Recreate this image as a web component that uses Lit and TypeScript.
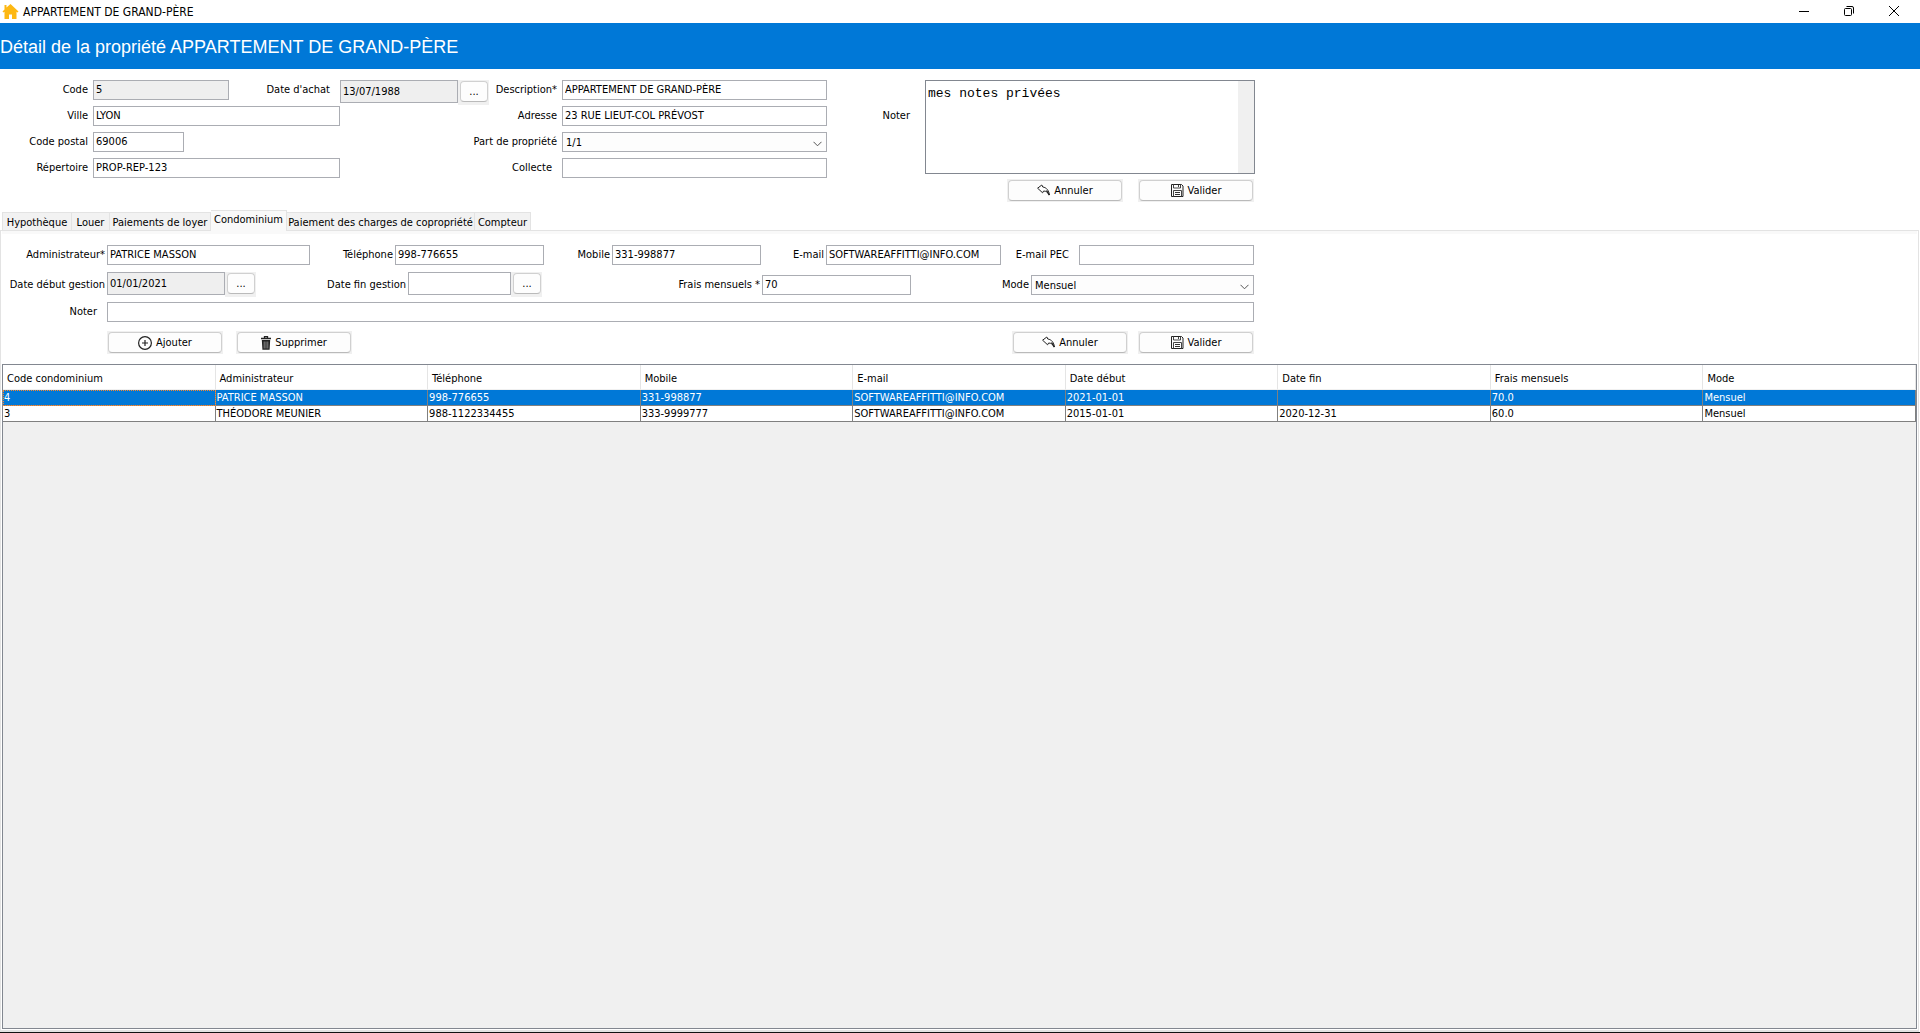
import { LitElement, html, css, svg, nothing } from "lit";
import { customElement } from "lit/decorators.js";

const TABS = [
  { label: "Hypothèque", width: 70 },
  { label: "Louer", width: 38 },
  { label: "Paiements de loyer", width: 101 },
  { label: "Condominium", width: 76 },
  { label: "Paiement des charges de copropriété", width: 188 },
  { label: "Compteur", width: 56 },
];

const COLUMNS = [
  "Code condominium", "Administrateur", "Téléphone", "Mobile", "E-mail",
  "Date début", "Date fin", "Frais mensuels", "Mode",
];

const ROWS = [
  ["4", "PATRICE MASSON", "998-776655", "331-998877", "SOFTWAREAFFITTI@INFO.COM", "2021-01-01", "", "70.0", "Mensuel"],
  ["3", "THÉODORE MEUNIER", "988-1122334455", "333-9999777", "SOFTWAREAFFITTI@INFO.COM", "2015-01-01", "2020-12-31", "60.0", "Mensuel"],
];

const icon = (content: unknown, w = 14, h = 14) =>
  html`<svg width=${w} height=${h} viewBox="0 0 ${w} ${h}" fill="none" aria-hidden="true">${content}</svg>`;

const undoIcon = icon(svg`<path d="M.6 4.200 4.800 1 5.800 3C9.500 3.500 12 6.500 12.400 11 10.800 8.200 9 7 6.600 7L5.600 8.800Z" fill="#fff" stroke="#222" stroke-linejoin="round"/><path d="M9.500 6.500 12.400 11.200" stroke="#222" stroke-width="1.400"/>`, 13, 13);
const saveIcon = icon(svg`<path d="M.5.5h10l1.500 1.500v10.500H.5z" stroke="#222"/><path d="M2.500.5v3.500h7V.5M7.500 1v2M2.500 12.500v-6h8v6" stroke="#444"/><path d="M4 8.500h5M4 10.500h5" stroke="#333"/>`, 13, 13);
const addIcon = icon(svg`<circle cx="7" cy="7" r="6.400" stroke="#222" stroke-width="1.200"/><path d="M7 4v6M4 7h6" stroke="#222" stroke-width="1.200"/>`);
const trashIcon = icon(svg`<path d="M0 2.500h10M3.500 2V.6h3V2" stroke="#222" stroke-width="1.300"/><path d="M.8 4h8.400l-.6 9.800H1.400z" fill="#222"/><path d="M3.200 5.500v7M5 5.500v7M6.800 5.500v7" stroke="#ccc" stroke-width=".6"/>`, 10, 14);
const chevron = html`<svg class="chevron" width="9" height="6" viewBox="0 0 9 6" fill="none" aria-hidden="true"><path d="M.5.8 4.500 4.800 8.500.8" stroke="#555"/></svg>`;

@customElement("app-root")
export class AppRoot extends LitElement {
  static styles = css`
    :host {
      display: flex;
      flex-direction: column;
      box-sizing: border-box;
      min-height: 100vh;
      background: #fff;
      border-bottom: 1px solid #111;
      color: #000;
      font: 11px/20px "DejaVu Sans Condensed", "DejaVu Sans", sans-serif;
    }
    * { box-sizing: border-box; }
    svg { display: block; flex: none; }
    button, input, select, textarea { font: inherit; color: inherit; margin: 0; }
    button { padding: 0; border: 0; background: none; }

    .titlebar { display: flex; align-items: center; height: 23px; padding-left: 2px; gap: 4px; font-size: 12px; }
    .titlebar h1 { flex: 1; margin: 0; font-size: 12px; font-weight: 400; }
    .window-button { display: flex; align-items: center; justify-content: center; width: 45px; height: 20px; }
    .window-buttons { display: flex; padding: 0 4px 2px 0; }

    .banner {
      margin: 0;
      padding-top: 2px;
      background: #0078d7;
      color: #fff;
      font: 18px/44px "Liberation Sans", Arial, sans-serif;
    }

    .property { display: flex; padding: 11px 0 8px; }
    .fields {
      display: grid;
      grid-template-columns: 93px 247px 222px 265px;
      grid-auto-rows: 20px;
      row-gap: 6px;
    }
    .label { text-align: right; padding-right: 5px; white-space: nowrap; }
    .label.wide { padding-right: 10px; }
    .label.far { padding-right: 15px; }
    .cell { display: flex; justify-content: space-between; min-width: 0; }
    .text {
      width: 100%;
      min-width: 0;
      height: 20px;
      padding: 0 2px;
      border: 1px solid #abadb3;
      border-radius: 0;
      background: #fff;
      outline: none;
    }
    .text.readonly { background: #efefef; }
    .code { width: 136px; }
    .postal { width: 91px; }
    .date { display: flex; height: 25px; }
    .date .text { width: 118px; height: 23px; }
    .date.short .text { width: 103px; }
    .pick { padding: 1px 1px 3px 2px; background: #f0f0f0; }
    .pick button { width: 28px; }
    .push {
      display: flex;
      align-items: center;
      justify-content: center;
      gap: 4px;
      width: 100%;
      height: 21px;
      border: 1px solid #d0d0d0;
      border-bottom-color: #bababa;
      border-radius: 4px;
      background: #fdfdfd;
    }
    .plate { width: 116px; height: 23px; padding: 1px; background: #f0f0f0; }
    .select { position: relative; }
    .select select {
      appearance: none;
      display: block;
      width: 100%;
      height: 20px;
      padding: 0 3px;
      border: 1px solid #abadb3;
      border-radius: 0;
      background: #fdfdfd;
      outline: none;
    }
    .chevron { position: absolute; right: 5px; top: 9px; pointer-events: none; }

    .notes { display: grid; grid-template-columns: 98px 330px; row-gap: 5px; }
    .notes .label { padding-top: 26px; }
    .memo { display: flex; height: 94px; border: 1px solid #828790; background: #fff; }
    .memo textarea {
      flex: 1;
      min-width: 0;
      padding: 3px 2px;
      border: 0;
      outline: none;
      resize: none;
      background: transparent;
      font: 13px/20px "Liberation Mono", "Courier New", monospace;
    }
    .track { width: 16px; background: #f0f0f0; }
    .actions { grid-column: 2; display: flex; justify-content: flex-end; gap: 15px; padding-right: 1px; }

    .tabs { display: flex; align-items: flex-end; height: 20px; padding-left: 2px; }
    .tab {
      height: 18px;
      border: 1px solid #e3e3e3;
      border-width: 1px 1px 0 0;
      background: #f2f2f2;
      line-height: 19px;
      white-space: nowrap;
    }
    .tab:first-child { border-left-width: 1px; }
    .tab.active { height: 21px; margin-bottom: -1px; padding-bottom: 2px; background: #f9f9f9; z-index: 1; line-height: 18px; }

    .panel {
      flex: 1;
      display: flex;
      flex-direction: column;
      margin-right: 1px;
      padding: 0 1px 1px;
      border: 1px solid #e3e3e3;
      border-bottom: 2px solid #e3e3e3;
    }
    .panel::before { content: ""; height: 3px; background: #f9f9f9; }
    .manager { display: flex; flex-direction: column; padding: 11px 0 10px; width: 1252px; }
    .line { display: grid; align-items: center; }
    .line .label { padding-right: 2px; }
    .line .label.wide { padding-right: 10px; }
    .contact { grid-template-columns: 105px 203px 85px 149px 68px 149px 65px 175px 78px 175px; }
    .period { grid-template-columns: 105px 149px 152px 136px 218px 149px 120px 223px; padding: 7px 0 5px; }
    .remark { grid-template-columns: 105px 1fr; }
    .commands { display: flex; gap: 13px; padding: 9px 0 0 105px; }
    .push-right { display: flex; gap: 10px; margin-left: auto; }

    .grid { flex: 1; border: 1px solid #828790; background: #f0f0f0; }
    table { width: 100%; table-layout: fixed; border-spacing: 0; background: #fff; }
    th {
      height: 25px;
      padding: 3px 4px 0;
      border-right: 1px solid #e5e5e5;
      border-bottom: 1px solid #f0f0f0;
      font-weight: 400;
      text-align: left;
    }
    td {
      height: 16px;
      padding: 0 1px;
      border-right: 1px solid #808080;
      border-bottom: 1px solid #808080;
      line-height: 15px;
      white-space: nowrap;
    }
    .selected td { background: #0078d7; color: #fff; }
    .selected td:first-child { outline: 1px dotted #ff8728; outline-offset: -1px; }
  `;

  private field(id: string, value = "", cls = "") {
    return html`<input class="text ${cls}" id=${id} type="text" .value=${value} ?readonly=${cls.includes("readonly")}>`;
  }

  private dateField(id: string, value: string, cls = "", readonly = true) {
    return html`<div class="date ${cls}">
      ${this.field(id, value, readonly ? "readonly" : "")}
      <span class="pick"><button class="push" type="button">...</button></span>
    </div>`;
  }

  private label(target: string, text: string, cls = "") {
    return html`<label class="label ${cls}" for=${target}>${text}</label>`;
  }

  private select(id: string, value: string) {
    return html`<div class="select"><select id=${id}><option>${value}</option></select>${chevron}</div>`;
  }

  private command(glyph: unknown, text: string) {
    return html`<div class="plate"><button class="push" type="button">${glyph}${text}</button></div>`;
  }

  render() {
    return html`
      <header class="titlebar">
        <svg width="17" height="17" viewBox="0 0 17 17" aria-hidden="true">
          <path d="M2.500 2h2v2.500L8.500 1 16.500 8.500l-1 1-1-.8V16H10v-4.500H7V16H2.500V8.700l-1 .8-1-1 2-2z" fill="#fdb813"/>
        </svg>
        <h1>APPARTEMENT DE GRAND-PÈRE</h1>
        <div class="window-buttons">
          <button class="window-button" type="button" aria-label="Réduire">${icon(svg`<path d="M0 5.500h10" stroke="#000"/>`, 10, 10)}</button>
          <button class="window-button" type="button" aria-label="Restaurer">${icon(svg`<rect x=".5" y="2.500" width="7" height="7" rx="1" stroke="#000"/><path d="M2.500.5H8q1.500 0 1.500 1.500v5.500" stroke="#000"/>`, 10, 10)}</button>
          <button class="window-button" type="button" aria-label="Fermer">${icon(svg`<path d="M0 0 10 10M10 0 0 10" stroke="#000"/>`, 10, 10)}</button>
        </div>
      </header>
      <h2 class="banner">Détail de la propriété APPARTEMENT DE GRAND-PÈRE</h2>

      <section class="property">
        <div class="fields">
          ${this.label("code", "Code")}
          <div class="cell">${this.field("code", "5", "code readonly")}${this.label("bought", "Date d'achat", "wide")}</div>
          <div class="cell">${this.dateField("bought", "13/07/1988")}${this.label("description", "Description*")}</div>
          ${this.field("description", "APPARTEMENT DE GRAND-PÈRE")}
          ${this.label("city", "Ville")}${this.field("city", "LYON")}
          ${this.label("address", "Adresse")}${this.field("address", "23 RUE LIEUT-COL PRÉVOST")}
          ${this.label("postal", "Code postal")}${this.field("postal", "69006", "postal")}
          ${this.label("share", "Part de propriété")}${this.select("share", "1/1")}
          ${this.label("folder", "Répertoire")}${this.field("folder", "PROP-REP-123")}
          ${this.label("collect", "Collecte", "wide")}${this.field("collect")}
        </div>
        <div class="notes">
          ${this.label("notes", "Noter", "far")}
          <div class="memo"><textarea id="notes" .value=${"mes notes privées"}></textarea><span class="track"></span></div>
          <div class="actions">${this.command(undoIcon, "Annuler")}${this.command(saveIcon, "Valider")}</div>
        </div>
      </section>

      <nav class="tabs" role="tablist">
        ${TABS.map((t, i) => html`<button class="tab ${i === 3 ? "active" : ""}" type="button" role="tab"
          aria-selected=${i === 3 ? "true" : "false"} style="width:${t.width}px">${t.label}</button>`)}
      </nav>

      <section class="panel" role="tabpanel">
        <div class="manager">
          <div class="line contact">
            ${this.label("manager", "Administrateur*")}${this.field("manager", "PATRICE MASSON")}
            ${this.label("phone", "Téléphone")}${this.field("phone", "998-776655")}
            ${this.label("mobile", "Mobile")}${this.field("mobile", "331-998877")}
            ${this.label("email", "E-mail")}${this.field("email", "SOFTWAREAFFITTI@INFO.COM")}
            ${this.label("pec", "E-mail PEC", "wide")}${this.field("pec")}
          </div>
          <div class="line period">
            ${this.label("start", "Date début gestion")}${this.dateField("start", "01/01/2021")}
            ${this.label("end", "Date fin gestion")}${this.dateField("end", "", "short", false)}
            ${this.label("fees", "Frais mensuels *")}${this.field("fees", "70")}
            ${this.label("mode", "Mode")}${this.select("mode", "Mensuel")}
          </div>
          <div class="line remark">${this.label("remark", "Noter", "wide")}${this.field("remark")}</div>
          <div class="commands">
            ${this.command(addIcon, "Ajouter")}${this.command(trashIcon, "Supprimer")}
            <div class="push-right">${this.command(undoIcon, "Annuler")}${this.command(saveIcon, "Valider")}</div>
          </div>
        </div>

        <div class="grid">
          <table>
            <thead><tr>${COLUMNS.map((c) => html`<th scope="col">${c}</th>`)}</tr></thead>
            <tbody>${ROWS.map((r, i) => html`<tr class=${i === 0 ? "selected" : nothing}>${r.map((v) => html`<td>${v}</td>`)}</tr>`)}</tbody>
          </table>
        </div>
      </section>
    `;
  }
}
